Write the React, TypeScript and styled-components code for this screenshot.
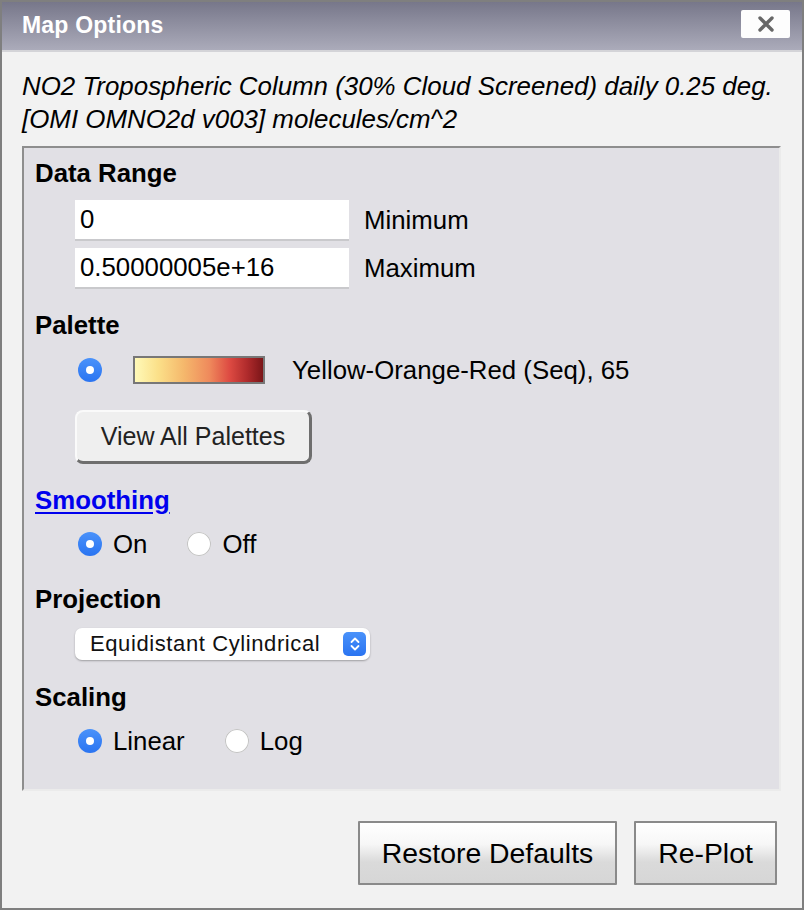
import { useState } from "react";
import styled, { createGlobalStyle } from "styled-components";

const GlobalStyle = createGlobalStyle`
  html, body {
    margin: 0;
    padding: 0;
    background: #f2f2f2;
  }
  body {
    font-family: "Liberation Sans", Arial, Helvetica, sans-serif;
    color: #000;
  }
  * {
    box-sizing: border-box;
  }
`;

interface IRadio {
  checked: boolean;
  label: string;
  onClick: () => void;
}

function Radio({ checked, label, onClick }: IRadio) {
  return (
    <RadioItem onClick={onClick}>
      <RadioDot $checked={checked} />
      {label && <RadioLabel>{label}</RadioLabel>}
    </RadioItem>
  );
}

function App() {
  const [minValue, setMinValue] = useState("0");
  const [maxValue, setMaxValue] = useState("0.50000005e+16");
  const [smoothing, setSmoothing] = useState("on");
  const [scaling, setScaling] = useState("linear");

  const minChange = (event: React.FormEvent<HTMLInputElement>) => {
    const {
      currentTarget: { value },
    } = event;
    setMinValue(value);
  };
  const maxChange = (event: React.FormEvent<HTMLInputElement>) => {
    const {
      currentTarget: { value },
    } = event;
    setMaxValue(value);
  };

  return (
    <>
      <GlobalStyle />
      <Dialog>
        <TitleBar>
          <Title>Map Options</Title>
          <CloseBtn type="button" aria-label="Close">
            <svg width="18" height="16" viewBox="0 0 18 16">
              <path
                d="M3 2 L15 14 M15 2 L3 14"
                stroke="#676767"
                strokeWidth="3.4"
                strokeLinecap="round"
              />
            </svg>
          </CloseBtn>
        </TitleBar>
        <Description>
          NO2 Tropospheric Column (30% Cloud Screened) daily 0.25 deg.
          <br />
          [OMI OMNO2d v003] molecules/cm^2
        </Description>
        <Panel>
          <Section>
            <Heading>Data Range</Heading>
            <RangeBox>
              <RangeRow>
                <RangeInput value={minValue} onChange={minChange} />
                <RangeLabel>Minimum</RangeLabel>
              </RangeRow>
              <RangeRow>
                <RangeInput value={maxValue} onChange={maxChange} />
                <RangeLabel>Maximum</RangeLabel>
              </RangeRow>
            </RangeBox>
          </Section>
          <Section>
            <Heading>Palette</Heading>
            <PaletteRow>
              <Radio checked={true} label="" onClick={() => {}} />
              <PaletteBar />
              <PaletteName>Yellow-Orange-Red (Seq), 65</PaletteName>
            </PaletteRow>
            <PaletteBtn type="button">View All Palettes</PaletteBtn>
          </Section>
          <Section>
            <Heading as="a" href="#" $link>
              Smoothing
            </Heading>
            <RadioRow>
              <Radio
                checked={smoothing === "on"}
                label="On"
                onClick={() => setSmoothing("on")}
              />
              <Radio
                checked={smoothing === "off"}
                label="Off"
                onClick={() => setSmoothing("off")}
              />
            </RadioRow>
          </Section>
          <Section $extra={4}>
            <Heading>Projection</Heading>
            <SelectBox>
              <SelectText>Equidistant Cylindrical</SelectText>
              <Stepper>
                <svg width="12" height="16" viewBox="0 0 12 16">
                  <path
                    d="M2.5 6 L6 2.5 L9.5 6 M2.5 10 L6 13.5 L9.5 10"
                    fill="none"
                    stroke="white"
                    strokeWidth="1.8"
                    strokeLinecap="round"
                    strokeLinejoin="round"
                  />
                </svg>
              </Stepper>
            </SelectBox>
          </Section>
          <Section $extra={1}>
            <Heading>Scaling</Heading>
            <RadioRow>
              <Radio
                checked={scaling === "linear"}
                label="Linear"
                onClick={() => setScaling("linear")}
              />
              <Radio
                checked={scaling === "log"}
                label="Log"
                onClick={() => setScaling("log")}
              />
            </RadioRow>
          </Section>
        </Panel>
        <Footer>
          <FooterBtn type="button" $width={259}>
            Restore Defaults
          </FooterBtn>
          <FooterBtn type="button" $width={143}>
            Re-Plot
          </FooterBtn>
        </Footer>
      </Dialog>
    </>
  );
}

export default App;

const Dialog = styled.div`
  display: flex;
  flex-direction: column;
  width: 804px;
  height: 910px;
  border: 2px solid #7f7f7f;
  background: #f2f2f2;
`;
const TitleBar = styled.div`
  display: flex;
  flex-shrink: 0;
  align-items: center;
  justify-content: space-between;
  height: 50px;
  padding: 0 12px 0 20px;
  background: linear-gradient(#77778a, #ababba);
  border-bottom: 2px solid #d4d4d8;
`;
const Title = styled.div`
  color: white;
  font-weight: 700;
  font-size: 23px;
  letter-spacing: 0.2px;
  margin-top: -2px;
`;
const CloseBtn = styled.button`
  display: flex;
  justify-content: center;
  align-items: center;
  width: 49px;
  height: 28px;
  margin-top: -4px;
  padding: 0;
  border: none;
  border-radius: 2px;
  background: #fdfdfd;
  cursor: pointer;
`;
const Description = styled.div`
  flex-shrink: 0;
  padding: 18px 20px 10px;
  font-style: italic;
  font-size: 25.9px;
  line-height: 33px;
`;
const Panel = styled.div`
  display: flex;
  flex-shrink: 0;
  flex-direction: column;
  gap: 21px;
  margin: 0 21px 0 20px;
  padding: 10px 11px 33px;
  background: #e1e0e5;
  border-style: solid;
  border-width: 2px;
  border-color: #8e8e8e #ebebeb #ebebeb #8e8e8e;
`;
const Section = styled.div<{ $extra?: number }>`
  display: flex;
  flex-direction: column;
  align-items: flex-start;
  margin-top: ${(props) => props.$extra || 0}px;
`;
const Heading = styled.div<{ $link?: boolean }>`
  font-weight: 700;
  font-size: 25.8px;
  line-height: 30px;
  color: ${(props) => (props.$link ? "#0000ee" : "black")};
  text-decoration: ${(props) => (props.$link ? "underline" : "none")};
  text-underline-offset: 3px;
`;
const RangeBox = styled.div`
  display: flex;
  flex-direction: column;
  gap: 7px;
  margin: 12px 0 0 40px;
`;
const RangeRow = styled.div`
  display: flex;
  align-items: center;
  gap: 15px;
`;
const RangeInput = styled.input`
  width: 274px;
  height: 41px;
  padding: 0 5px;
  border: none;
  border-bottom: 2px solid #c9c9cc;
  background: white;
  font-family: inherit;
  font-size: 25.8px;
  color: black;
  outline: none;
`;
const RangeLabel = styled.span`
  font-size: 25.8px;
`;
const PaletteRow = styled.div`
  display: flex;
  align-items: center;
  height: 30px;
  margin: 15px 0 0 43px;
`;
const PaletteBar = styled.div`
  width: 132px;
  height: 28px;
  margin-left: 31px;
  border: 2px solid #777;
  background: linear-gradient(
    to right,
    #fff9b8 0%,
    #fbe089 18%,
    #f5b86c 38%,
    #ef8a5c 58%,
    #dd4a42 74%,
    #ae2a2b 88%,
    #7a1518 100%
  );
`;
const PaletteName = styled.span`
  margin-left: 27px;
  font-size: 25.8px;
`;
const PaletteBtn = styled.button`
  width: 237px;
  height: 54px;
  margin: 25px 0 0 40px;
  padding: 0;
  border-style: solid;
  border-width: 2px 3px 3px 2px;
  border-color: #fafafa #6e6e6e #6e6e6e #fafafa;
  border-radius: 8px;
  background: #efefef;
  color: #222;
  font-family: inherit;
  font-size: 25px;
  cursor: pointer;
`;
const RadioRow = styled.div`
  display: flex;
  align-items: center;
  gap: 40px;
  height: 30px;
  margin: 14px 0 0 43px;
`;
const RadioItem = styled.label`
  display: flex;
  align-items: center;
  gap: 11px;
  cursor: pointer;
`;
const RadioDot = styled.span<{ $checked: boolean }>`
  position: relative;
  width: 24px;
  height: 24px;
  border-radius: 50%;
  background: ${(props) =>
    props.$checked ? "linear-gradient(#4a92fa, #2a74f1)" : "white"};
  box-shadow: ${(props) =>
    props.$checked ? "none" : "inset 0 0 0 1px #c4c4c4"};
  &::after {
    content: "";
    display: ${(props) => (props.$checked ? "block" : "none")};
    position: absolute;
    left: 8px;
    top: 8px;
    width: 8px;
    height: 8px;
    border-radius: 50%;
    background: white;
  }
`;
const RadioLabel = styled.span`
  font-size: 25.8px;
`;
const SelectBox = styled.div`
  display: flex;
  align-items: center;
  justify-content: space-between;
  width: 295px;
  height: 32px;
  margin: 14px 0 0 40px;
  padding: 0 4px 0 15px;
  background: white;
  border-radius: 7px;
  box-shadow: 0 1px 2px rgba(0, 0, 0, 0.3);
`;
const SelectText = styled.span`
  font-size: 22px;
  letter-spacing: 0.6px;
  color: #111;
`;
const Stepper = styled.span`
  display: flex;
  justify-content: center;
  align-items: center;
  width: 23px;
  height: 24px;
  border-radius: 5px;
  background: linear-gradient(#4a92fa, #2a74f1);
`;
const Footer = styled.div`
  display: flex;
  flex-shrink: 0;
  justify-content: flex-end;
  gap: 17px;
  padding: 30px 25px 0;
`;
const FooterBtn = styled.button<{ $width: number }>`
  width: ${(props) => props.$width}px;
  height: 64px;
  padding: 0;
  border: 2px solid #8a8a8a;
  border-radius: 1px;
  background: linear-gradient(#ffffff 0%, #f7f7f7 35%, #dadada 65%, #d6d6d6 100%);
  color: black;
  font-family: inherit;
  font-size: 28.4px;
  white-space: nowrap;
  cursor: pointer;
`;
